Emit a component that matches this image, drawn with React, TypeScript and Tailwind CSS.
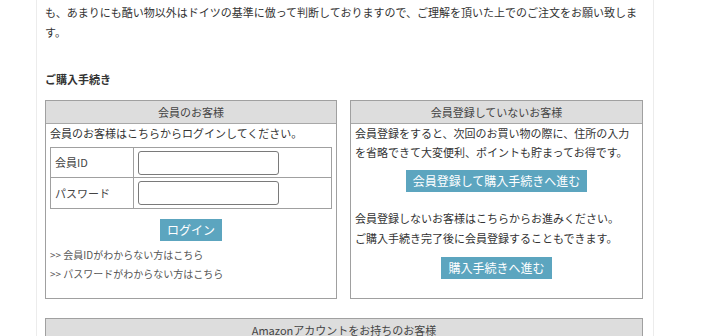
const FONT = { fontFamily: '"Noto Sans CJK JP", "Noto Sans", sans-serif' };

function PanelHeader({ title }: { title: string }) {
  return (
    <div className="h-[23px] bg-[#dddddd] border-b border-[#a8a8a8] flex items-center justify-center text-[11px] text-[#444]">
      {title}
    </div>
  );
}

function BlueButton({ label }: { label: string }) {
  return (
    <button className="h-[22px] px-[7px] bg-[#5ca5bf] text-white text-[12px] leading-[22px]">{label}</button>
  );
}

function LoginRow({ label, type, last }: { label: string; type: string; last?: boolean }) {
  return (
    <div className={`flex h-[30px] ${last ? '' : 'border-b border-[#a0a0a0]'}`}>
      <div className="w-[83px] border-r border-[#a0a0a0] flex items-center pl-[4px] text-[11px] text-[#444]">{label}</div>
      <div className="flex-1 flex items-center pl-[4px]">
        <input type={type} className="w-[141px] h-[24px] border border-[#7a7a7a] rounded-[3px] bg-white" />
      </div>
    </div>
  );
}

export default function App() {
  return (
    <div className="w-[710px] h-[336px] overflow-hidden bg-white text-[#333]" style={FONT}>
      <div className="ml-[36px] w-[618px] h-full border-l border-r border-[#ececec] pl-[8px] pr-[9px]">
        <p className="pt-[2px] text-[11px] leading-[20px] whitespace-nowrap">
          も、あまりにも酷い物以外はドイツの基準に倣って判断しておりますので、ご理解を頂いた上でのご注文をお願い致しま
          <br />
          す。
        </p>

        <h3 className="mt-[27px] text-[11px] leading-[20px] font-semibold text-[#333]">ご購入手続き</h3>

        <div className="mt-[11px] flex gap-[13px]">
          {/* member login */}
          <div className="w-[292px] border border-[#a0a0a0] flex flex-col">
            <PanelHeader title="会員のお客様" />
            <div className="px-[4px] text-[11px] leading-[18px]">会員のお客様はこちらからログインしてください。</div>
            <div className="mx-[4px] mt-[5px] border border-[#a0a0a0]">
              <LoginRow label="会員ID" type="text" />
              <LoginRow label="パスワード" type="password" last />
            </div>
            <div className="mt-[10px] flex justify-center">
              <BlueButton label="ログイン" />
            </div>
            <div className="mt-[4px] px-[4px] pb-[15px] text-[10px] leading-[19px] text-[#555]">
              <div>&gt;&gt; 会員IDがわからない方はこちら</div>
              <div>&gt;&gt; パスワードがわからない方はこちら</div>
            </div>
          </div>

          {/* guest */}
          <div className="w-[293px] border border-[#a0a0a0] flex flex-col">
            <PanelHeader title="会員登録していないお客様" />
            <div className="px-[4px] text-[11px] leading-[19px]">
              会員登録をすると、次回のお買い物の際に、住所の入力
              <br />
              を省略できて大変便利、ポイントも貯まってお得です。
            </div>
            <div className="mt-[8px] flex justify-center">
              <BlueButton label="会員登録して購入手続きへ進む" />
            </div>
            <div className="mt-[16px] px-[4px] text-[11px] leading-[20px]">
              会員登録しないお客様はこちらからお進みください。
              <br />
              ご購入手続き完了後に会員登録することもできます。
            </div>
            <div className="mt-[9px] flex justify-center">
              <BlueButton label="購入手続きへ進む" />
            </div>
          </div>
        </div>

        <div className="mt-[19px] w-[598px] border border-[#a0a0a0]">
          <PanelHeader title="Amazonアカウントをお持ちのお客様" />
          <div className="h-[40px]" />
        </div>
      </div>
    </div>
  );
}
